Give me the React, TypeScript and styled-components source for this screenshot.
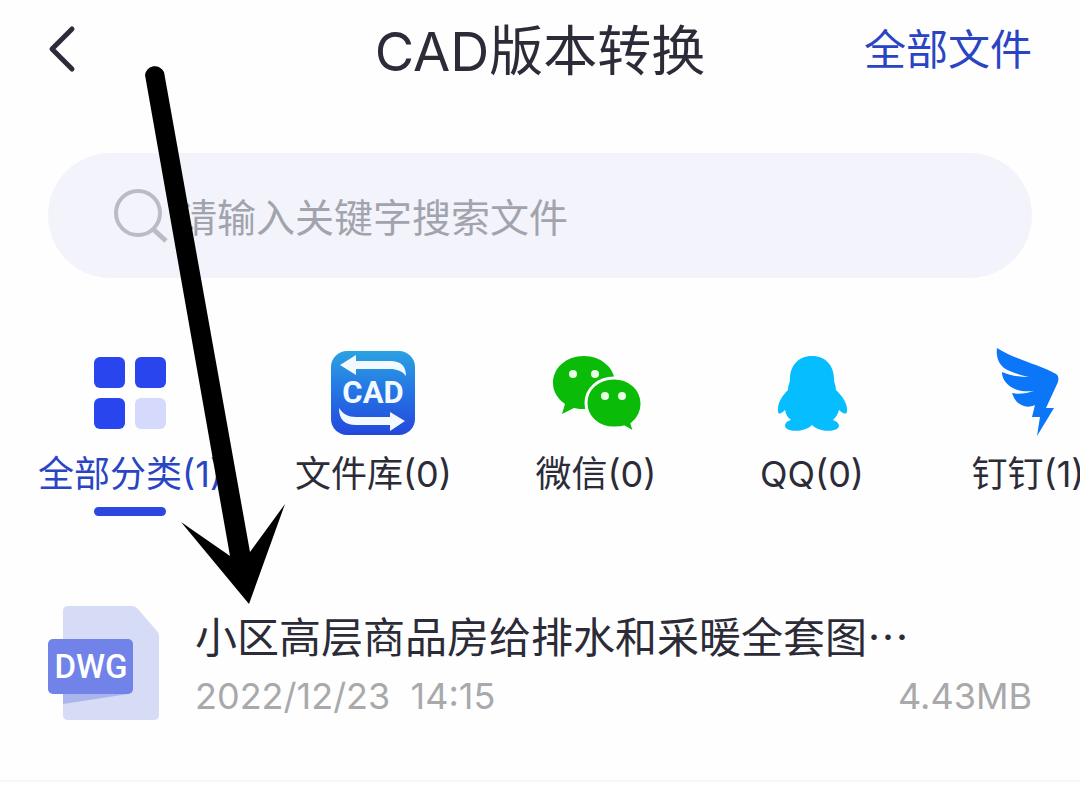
import React from "react";
import styled, { createGlobalStyle } from "styled-components";

const Global = createGlobalStyle`
  *, *::before, *::after { box-sizing: border-box; }
  html { background: #fefefe; }
  body {
    margin: 0;
    background: #fefefe;
    color: #2b2c38;
    font-family: Inter, "Noto Sans CJK SC", sans-serif;
    overflow-x: hidden;
  }
  button, input { font: inherit; color: inherit; }
  svg { display: block; }
`;

const Page = styled.main`
  position: relative;
  overflow: hidden;
`;

const Header = styled.header`
  display: grid;
  grid-template-columns: 1fr auto 1fr;
  align-items: center;
  height: 100px;
  padding: 0 48px;
`;

const BackButton = styled.button`
  justify-self: start;
  padding: 0;
  border: 0;
  background: none;
`;

const Title = styled.h1`
  margin: 0;
  padding-top: 4px;
  font-size: 54px;
  line-height: 80px;
  font-weight: 400;
`;

const AllFilesLink = styled.a`
  justify-self: end;
  color: #2a45c4;
  font-size: 42px;
  line-height: 60px;
  text-decoration: none;
`;

const SearchBar = styled.label`
  display: flex;
  align-items: center;
  gap: 8px;
  height: 125px;
  margin: 53px 48px 0;
  padding: 0 64px;
  border-radius: 63px;
  background: #f3f3fb;
`;

const SearchInput = styled.input`
  flex: 1;
  min-width: 0;
  height: 64px;
  padding: 4px 0 0;
  border: 0;
  outline: 0;
  background: none;
  font-size: 39px;
  &::placeholder { color: #a1a3ad; opacity: 1; }
`;

const Tabs = styled.nav`
  display: flex;
  margin-top: 67px;
  padding-left: 2px;
  overflow: hidden;
`;

const Tab = styled.button<{ $active?: boolean }>`
  display: flex;
  flex: none;
  flex-direction: column;
  align-items: center;
  min-width: 216px;
  padding: 0 36px;
  border: 0;
  background: none;
  color: ${(p) => (p.$active ? "#2a45c4" : "#2b2c38")};
  font-size: 36px;
  line-height: 54px;
  white-space: nowrap;

  &::after {
    content: "";
    width: 72px;
    height: 9px;
    margin-top: 6px;
    border-radius: 5px;
    background: ${(p) => (p.$active ? "#2c47e0" : "transparent")};
  }
`;

const TabIcon = styled.svg`
  width: 96px;
  height: 96px;
  margin-bottom: 6px;
`;

const FileList = styled.ul`
  margin: 58px 0 0;
  padding: 0;
  list-style: none;
`;

const FileRow = styled.li`
  display: flex;
  align-items: center;
  gap: 36px;
  height: 208px;
  padding: 6px 48px 34px;
  border-bottom: 2px solid #f7f7f8;
`;

const FileInfo = styled.div`
  flex: 1;
  min-width: 0;
  padding-top: 4px;
`;

const FileName = styled.h2`
  margin: 0;
  overflow: hidden;
  font-size: 42px;
  line-height: 62px;
  font-weight: 400;
  white-space: nowrap;
`;

const FileMeta = styled.div`
  display: flex;
  justify-content: space-between;
  color: #a9a9ab;
  font-size: 36px;
  line-height: 54px;
  white-space: pre;
`;

const PointerArrow = styled.svg`
  position: absolute;
  top: 60px;
  left: 140px;
  pointer-events: none;
`;

const GridIcon = () => (
  <TabIcon viewBox="0 0 96 96">
    <g fill="#2945ee">
      <rect x="12" y="12" width="31" height="31" rx="6" />
      <rect x="53" y="12" width="31" height="31" rx="6" />
      <rect x="12" y="53" width="31" height="31" rx="6" />
    </g>
    <rect x="53" y="53" width="31" height="31" rx="6" fill="#d5dafc" />
  </TabIcon>
);

const CadIcon = () => (
  <TabIcon viewBox="0 0 96 96">
    <defs>
      <linearGradient id="cad" x1="0" y1="0" x2="0" y2="1">
        <stop offset="0" stopColor="#2ba2e2" />
        <stop offset="0.5" stopColor="#2473e4" />
        <stop offset="1" stopColor="#2448dc" />
      </linearGradient>
    </defs>
    <rect x="6" y="6" width="84" height="84" rx="16" fill="url(#cad)" />
    <g fill="#f2faff">
      <path d="M15 20 31 10v6h34c11 0 16 5 16 15-4-5-9-7-16-7H31v6z" />
      <path d="M80 76 65 67v5H31c-8 0-13-3-17-9 0 12 6 17 17 17h34v6z" />
    </g>
    <text x="48" y="58" textAnchor="middle" fill="#f2faff" fontFamily="Roboto, sans-serif" fontWeight="700" fontSize="31">CAD</text>
  </TabIcon>
);

const WeChatIcon = () => (
  <TabIcon viewBox="0 0 96 96">
    <path fill="#0abb07" d="M36 11C18 11 5 23 5 38c0 9 5 16 12 21l-3 10 12-6c4 1 7 1 12 1 17-1 29-12 29-26 0-15-14-27-31-27z" />
    <path fill="#0abb07" stroke="#fefefe" strokeWidth="3" d="M66 33c-16 0-28 11-28 25s12 25 28 25c4 0 7 0 10-1l11 6-3-9c6-5 10-12 10-20 0-15-12-26-28-26z" />
    <g fill="#e9ffe4">
      <circle cx="25" cy="29" r="4" />
      <circle cx="47" cy="29" r="4" />
      <circle cx="57" cy="51" r="4" />
      <circle cx="74" cy="51" r="4" />
    </g>
  </TabIcon>
);

const QqIcon = () => (
  <TabIcon viewBox="0 0 96 96">
    <path fill="#06bdff" d="M48 11c-14 0-22 10-22 23 0 4-2 6-2 11-6 6-11 13-10 22 1 3 4 1 7-2 1 5 3 8 6 10-4 1-6 3-6 6 1 7 21 6 27-1 6 7 26 8 27 1 0-3-3-5-6-6 3-3 5-6 6-10 3 3 7 5 8 2 1-9-5-16-11-22 0-5-2-7-2-11 0-13-8-23-22-23z" />
  </TabIcon>
);

const DingTalkIcon = () => (
  <TabIcon viewBox="0 0 96 96">
    <path fill="#0b76f8" d="M17 3C36 15 58 19 76 29c2 1 3 4 2 8L66 63h8L57 91l3-19h-8l3-12c-4 2-8 2-11 1-7-2-10-7-12-13 7 2 15 0 22-2-9 1-17 0-23-4-6-4-9-9-9-15 9 4 18 5 27 5-9-2-19-5-25-9-6-5-8-12-7-20z" />
  </TabIcon>
);

const tabs = [
  { name: "全部分类", count: 1, Icon: GridIcon },
  { name: "文件库", count: 0, Icon: CadIcon },
  { name: "微信", count: 0, Icon: WeChatIcon },
  { name: "QQ", count: 0, Icon: QqIcon },
  { name: "钉钉", count: 1, Icon: DingTalkIcon },
];

const DwgIcon = () => (
  <svg width="111" height="114" viewBox="0 0 111 114">
    <path fill="#d6dcf5" d="M20 0h64q3 0 5 2l20 23q2 2 2 5v79q0 5-5 5H20q-5 0-5-5V5q0-5 5-5z" />
    <path fill="#aab5ed" d="M15 88h65L15 98z" />
    <rect y="33" width="85" height="55" rx="5" fill="#7183e8" />
    <text x="43" y="72" textAnchor="middle" fill="#fff" fontFamily="Roboto, sans-serif" fontWeight="500" fontSize="33">DWG</text>
  </svg>
);

export default function App() {
  return (
    <Page lang="zh-CN">
      <Global />
      <Header>
        <BackButton aria-label="返回">
          <svg width="28" height="50" viewBox="0 0 28 50" fill="none" stroke="#2b2c38" strokeWidth="5" strokeLinecap="round" strokeLinejoin="round">
            <path d="M24 4 4 24l20 20" />
          </svg>
        </BackButton>
        <Title>CAD版本转换</Title>
        <AllFilesLink href="#all">全部文件</AllFilesLink>
      </Header>

      <SearchBar>
        <svg width="58" height="56" viewBox="0 0 58 56" fill="none" stroke="#b9bcc6" strokeWidth="4">
          <circle cx="26" cy="25" r="22" />
          <path d="m41 41 13 12" strokeWidth="5" />
        </svg>
        <SearchInput type="text" aria-label="搜索文件" placeholder="请输入关键字搜索文件" />
      </SearchBar>

      <Tabs>
        {tabs.map(({ name, count, Icon }, i) => (
          <Tab key={name} type="button" $active={i === 0}>
            <Icon />
            <span>{name}({count})</span>
          </Tab>
        ))}
      </Tabs>

      <FileList>
        <FileRow>
          <DwgIcon />
          <FileInfo>
            <FileName>小区高层商品房给排水和采暖全套图⋯</FileName>
            <FileMeta>
              <span>2022/12/23  14:15</span>
              <span>4.43MB</span>
            </FileMeta>
          </FileInfo>
        </FileRow>
      </FileList>

      <PointerArrow width="150" height="550" viewBox="140 60 150 550" aria-hidden="true">
        <path d="M145 75a10 10 0 0 1 19-3L250 552 285 504 249 604 181 522 230 556z" />
      </PointerArrow>
    </Page>
  );
}
